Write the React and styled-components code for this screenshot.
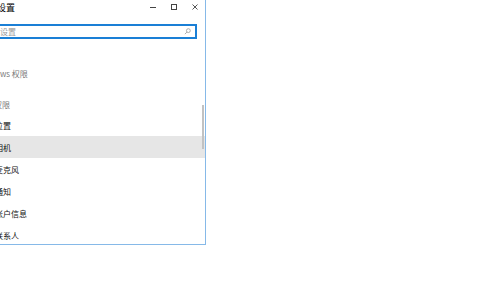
import React from "react";
import styled, { createGlobalStyle } from "styled-components";

const Global = createGlobalStyle`
  html, body { margin: 0; padding: 0; background: #ffffff; overflow: hidden; }
  body { width: 480px; height: 300px; font-family: "Noto Sans CJK SC", "Noto Sans", sans-serif; }
`;

const Desktop = styled.div`
  width: 480px;
  height: 300px;
  overflow: hidden;
  background: #ffffff;
`;

const Window = styled.div`
  margin: -12px 0 0 -60px;
  width: 264px;
  height: 255px;
  border: 1px solid #86b9e8;
  background: #ffffff;
  display: flex;
  flex-direction: column;
  overflow: hidden;
  position: relative;
`;

const TitleBar = styled.div`
  height: 36px;
  flex: none;
  display: flex;
  align-items: center;
  padding-left: 56px;
`;

const Title = styled.div`
  flex: 1;
  font-size: 9px;
  color: #000;
`;

const Caption = styled.div`
  width: 21px;
  height: 36px;
  display: flex;
  align-items: center;
  justify-content: center;
`;

const SearchBox = styled.div`
  margin: -1px 8px 0 20px;
  height: 11px;
  border: 2px solid #1a7fd6;
  display: flex;
  align-items: center;
  padding: 0 4px 0 21px;
  flex: none;
`;

const Placeholder = styled.div`
  flex: 1;
  font-size: 8px;
  color: #9a9a9a;
`;

const Header = styled.div`
  font-size: 8px;
  color: #7a7a7a;
  padding-left: ${(p) => p.$indent}px;
  margin: ${(p) => p.$top}px 0 ${(p) => p.$bottom || 0}px;
  height: 16px;
  line-height: 16px;
  flex: none;
`;

const Row = styled.div`
  height: 22px;
  flex: none;
  display: flex;
  align-items: center;
  padding-left: 54px;
  font-size: 8px;
  color: #111;
  background: ${(p) => (p.$selected ? "#e6e6e6" : "transparent")};
`;

const Scrollbar = styled.div`
  position: absolute;
  right: 1px;
  top: 116px;
  width: 2px;
  height: 44px;
  background: #c2c2c2;
`;

const items = ["位置", "相机", "麦克风", "通知", "帐户信息", "联系人", "日历"];

export default function App() {
  return (
    <Desktop>
      <Global />
      <Window>
        <TitleBar>
          <Title>设置</Title>
          <Caption>
            <svg width="8" height="8" viewBox="0 0 8 8"><path d="M1 4.5h6" stroke="#444" strokeWidth="1" /></svg>
          </Caption>
          <Caption>
            <svg width="8" height="8" viewBox="0 0 8 8"><rect x="1.5" y="1.5" width="5" height="5" fill="none" stroke="#444" strokeWidth="1" /></svg>
          </Caption>
          <Caption>
            <svg width="8" height="8" viewBox="0 0 8 8"><path d="M1.5 1.5l5 5M6.5 1.5l-5 5" stroke="#444" strokeWidth="0.9" /></svg>
          </Caption>
        </TitleBar>
        <SearchBox>
          <Placeholder>查找设置</Placeholder>
          <svg width="7" height="7" viewBox="0 0 8 8"><circle cx="5" cy="3" r="2.2" fill="none" stroke="#9a9a9a" strokeWidth="0.9" /><path d="M3.4 4.6L1 7" stroke="#9a9a9a" strokeWidth="0.9" /></svg>
        </SearchBox>
        <Header $indent={35} $top={27}>Windows 权限</Header>
        <Header $indent={37} $top={15} $bottom={1}>应用权限</Header>
        <Row>位置</Row>
        <Row $selected>相机</Row>
        {items.slice(2).map((t) => (
          <Row key={t}>{t}</Row>
        ))}
        <Scrollbar />
      </Window>
    </Desktop>
  );
}
